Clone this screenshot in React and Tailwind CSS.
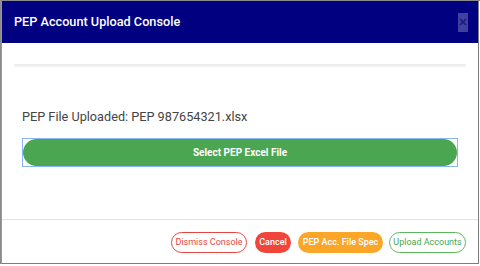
import React from 'react';

const App = () => {
  return (
    <div className="w-[480px] h-[266px] bg-white overflow-hidden font-['Roboto',sans-serif]">
      <div className="flex h-[264px] border-t border-l border-[#8a8a8a]">
        {/* strip of page behind the dialog */}
        <div className="w-px bg-[#9a9a9a]" />

        {/* Dialog */}
        <div className="w-[477px] flex flex-col border-r border-b border-[#7d7d7d] bg-white">
          {/* Header */}
          <div className="h-[42px] bg-[#000080] flex items-center justify-between pl-[12px] pr-[10px]">
            <h2 className="text-white text-[12.7px] font-medium">PEP Account Upload Console</h2>
            <button className="w-[10px] h-[19px] bg-white/25 flex items-center justify-center">
              <svg width="8" height="8" viewBox="0 0 8 8">
                <path d="M1 1L7 7M7 1L1 7" stroke="#1a1a7a" strokeWidth="1.6" />
              </svg>
            </button>
          </div>

          {/* Body */}
          <div className="flex-1 px-[12px] pt-[21px]">
            <div className="h-[2px] bg-[#eeeeee] shadow-[0_1px_2px_rgba(0,0,0,0.06)]" />
            <div className="px-[8px] pt-[43px]">
              <p className="text-[12.7px] text-[#444444] leading-[16px]">PEP File Uploaded: PEP 987654321.xlsx</p>
              <div className="mt-[13px] border border-[#8ab4f8]">
                <button className="w-full h-[27px] rounded-full bg-[#4aa650] text-white text-[10px] font-bold">
                  Select PEP Excel File
                </button>
              </div>
            </div>
          </div>

          {/* Footer */}
          <div className="h-[44px] border-t border-[#e3e3e3] flex items-center justify-end pr-[12px] pt-[2px]">
            <button className="w-[76px] h-[21px] rounded-full border border-[#e5473e] text-[#e5473e] text-[9px]">
              Dismiss Console
            </button>
            <button className="ml-[8px] w-[36px] h-[21px] rounded-full bg-[#f0453a] text-white text-[9px] font-medium">
              Cancel
            </button>
            <button className="ml-[7px] w-[85px] h-[21px] rounded-full bg-[#fba628] text-white text-[9px] font-medium">
              PEP Acc. File Spec
            </button>
            <button className="ml-[6px] w-[77px] h-[21px] rounded-full border border-[#5cb85c] text-[#4aa650] text-[9px]">
              Upload Accounts
            </button>
          </div>
        </div>
      </div>
    </div>
  );
};

export default App;
